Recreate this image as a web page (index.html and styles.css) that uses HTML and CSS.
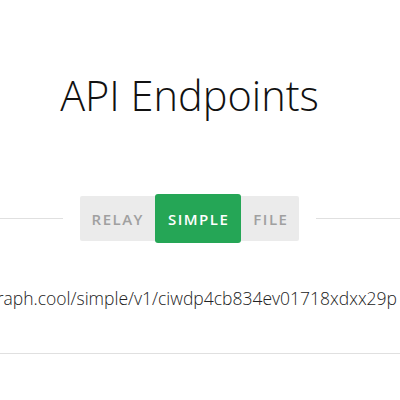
FILE: index.html
```html
<!DOCTYPE html>
<html>
<head>
<meta charset="utf-8">
<link rel="stylesheet" href="styles.css">
</head>
<body>
<div class="page">
  <h1 class="title">API Endpoints</h1>
  <div class="switch-row">
    <div class="rule"></div>
    <div class="tabs">
      <div class="tab">RELAY</div>
      <div class="tab active">SIMPLE</div>
      <div class="tab">FILE</div>
    </div>
    <div class="rule"></div>
  </div>
  <div class="url-row">
    <div class="url">https://api.graph.cool/simple/v1/ciwdp4cb834ev01718xdxx29p</div>
  </div>
  <div class="divider"></div>
</div>
</body>
</html>
```
FILE: styles.css
```css
html, body {
  margin: 0;
  padding: 0;
  background: #ffffff;
  overflow: hidden;
}
body {
  font-family: "Open Sans", sans-serif;
  width: 400px;
  height: 400px;
}
.page {
  width: 421px;
  margin-left: -21px;
  display: flex;
  flex-direction: column;
}
.title {
  margin: 75px 0 0;
  font-size: 41.5px;
  line-height: 40px;
  font-weight: 300;
  color: #111111;
  text-align: center;
}
.switch-row {
  margin-top: 79px;
  display: flex;
  align-items: center;
  gap: 17px;
  height: 49px;
}
.rule {
  flex: 1;
  height: 1px;
  background: #e0e0e0;
}
.tabs {
  display: flex;
  align-items: center;
  height: 45px;
  background: #ebebeb;
  border-radius: 2px;
}
.tab {
  height: 45px;
  display: flex;
  align-items: center;
  padding: 0 11px 0 12px;
  font-size: 15px;
  font-weight: 600;
  letter-spacing: 1.5px;
  color: #a0a0a0;
}
.tab.active {
  height: 49px;
  margin: -2px 0;
  padding: 0 12px 0 13px;
  background: #25a656;
  color: #ffffff;
  border-radius: 3px;
}
.url-row {
  margin-top: 44px;
  display: flex;
  justify-content: flex-end;
  overflow: hidden;
  padding-right: 3px;
}
.url {
  white-space: nowrap;
  font-size: 17.5px;
  font-weight: 300;
  line-height: 22px;
  color: #222222;
  flex-shrink: 0;
}
.divider {
  margin-top: 44px;
  height: 1px;
  background: #e0e0e0;
}
```
